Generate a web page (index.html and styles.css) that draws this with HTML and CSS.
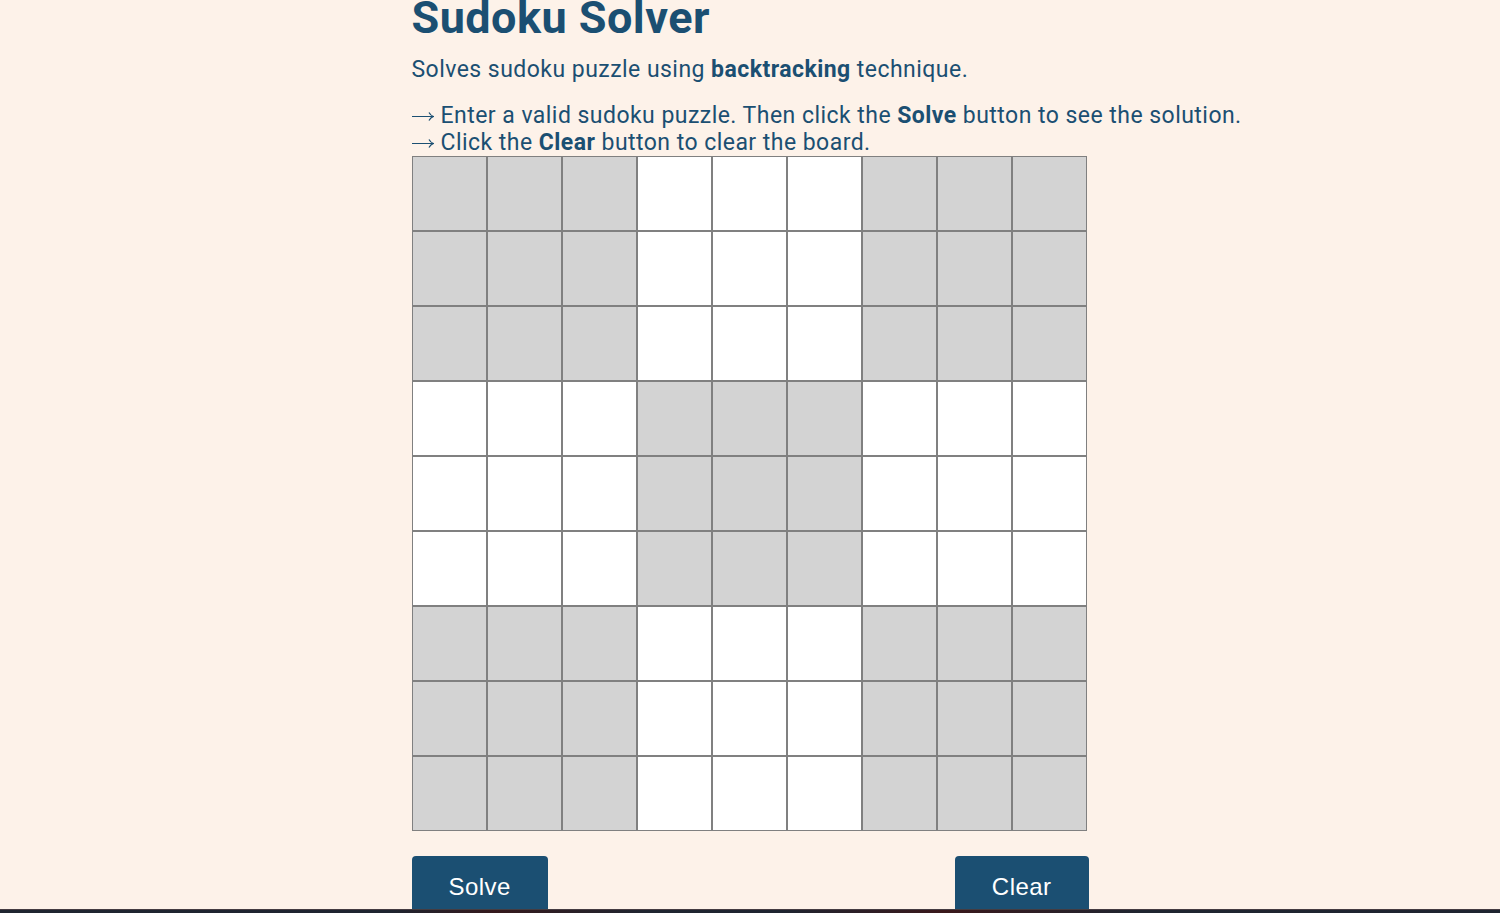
FILE: index.html
```html
<!DOCTYPE html>
<html lang="en">
<head>
<meta charset="utf-8">
<title>Sudoku Solver</title>
<link rel="stylesheet" href="styles.css">
</head>
<body>
<main class="page">
  <div class="solver">
    <h1 class="title">Sudoku Solver</h1>
    <p class="intro">Solves sudoku puzzle using <strong>backtracking</strong> technique.</p>
    <p class="steps"><svg class="arrow" viewBox="0 0 22 12" aria-hidden="true"><path d="M0 5.5H21M17 1.5Q18.5 4.5 21.5 5.5Q18.5 6.5 17 9.5"/></svg>Enter a valid sudoku puzzle. Then click the <strong>Solve</strong> button to see the solution.<br><svg class="arrow" viewBox="0 0 22 12" aria-hidden="true"><path d="M0 5.5H21M17 1.5Q18.5 4.5 21.5 5.5Q18.5 6.5 17 9.5"/></svg>Click the <strong>Clear</strong> button to clear the board.</p>
    <div class="board" id="board"></div>
    <div class="actions">
      <button class="button" type="button" id="solve">Solve</button>
      <button class="button" type="button" id="clear">Clear</button>
    </div>
  </div>
</main>
<footer class="strip"></footer>
<script src="script.js"></script>
</body>
</html>
```
FILE: styles.css
```css
* { box-sizing: border-box; }
body {
  margin: 0;
  height: 100vh;
  display: flex;
  flex-direction: column;
  background: #fdf2e9;
  color: #1b4f72;
  font-family: Roboto, sans-serif;
  font-size: 23px;
  line-height: 27px;
  letter-spacing: 0.02em;
}
.page {
  flex: 1;
  min-height: 0;
  overflow: hidden;
}
.solver {
  width: 677px;
  margin: 0 auto;
}
.title {
  margin: 0 0 20px;
  font-size: 45px;
  line-height: 36px;
}
.intro { margin: 0 0 19px; }
.steps { margin: 0; white-space: nowrap; }
.arrow {
  width: 22px;
  height: 12px;
  margin-right: 7px;
  fill: none;
  stroke: currentColor;
  stroke-width: 1.2;
}
.board {
  display: grid;
  grid-template-columns: repeat(9, 75px);
  grid-auto-rows: 75px;
}
.cell {
  width: 100%;
  height: 100%;
  padding: 0;
  border: 1px solid #808080;
  border-radius: 0;
  background: #fff;
  color: inherit;
  font: inherit;
  text-align: center;
}
.cell-shaded { background: #d3d3d3; }
.actions {
  display: flex;
  justify-content: space-between;
  margin-top: 25px;
}
.button {
  padding: 17px 37px;
  border: 0;
  border-radius: 4px;
  background: #1b4f72;
  color: #fff;
  font: inherit;
  font-family: "Liberation Sans", Arial, sans-serif;
  font-size: 24px;
  letter-spacing: inherit;
}
.strip {
  height: 4px;
  border-top: 1px solid #443c41;
  background: linear-gradient(90deg, #1f2530 0%, #1e2430 26%, #35191c 33%, #1f2530 43%, #1e2430 52%, #3a181b 63%, #1f2530 76%, #1e2430 100%);
}
```
FILE: script.js
```js
const board = document.getElementById("board");
for (let i = 0; i < 81; i++) {
  const row = Math.floor(i / 9);
  const col = i % 9;
  const box = Math.floor(row / 3) + Math.floor(col / 3);
  const cell = document.createElement("input");
  cell.type = "text";
  cell.inputMode = "numeric";
  cell.maxLength = 1;
  cell.className = box % 2 === 0 ? "cell cell-shaded" : "cell";
  cell.setAttribute("aria-label", `Row ${row + 1}, column ${col + 1}`);
  board.append(cell);
}

const cells = [...board.children];

function allowed(grid, index, value) {
  const row = Math.floor(index / 9);
  const col = index % 9;
  return grid.every((other, i) => {
    if (i === index || other !== value) return true;
    const r = Math.floor(i / 9);
    const c = i % 9;
    const sameBox = Math.floor(r / 3) === Math.floor(row / 3) && Math.floor(c / 3) === Math.floor(col / 3);
    return r !== row && c !== col && !sameBox;
  });
}

function solve(grid) {
  const index = grid.indexOf(0);
  if (index < 0) return true;
  for (let value = 1; value <= 9; value++) {
    if (allowed(grid, index, value)) {
      grid[index] = value;
      if (solve(grid)) return true;
      grid[index] = 0;
    }
  }
  return false;
}

document.getElementById("solve").addEventListener("click", () => {
  const grid = cells.map((cell) => Number(cell.value) || 0);
  const valid = grid.every((value, i) => value === 0 || allowed(grid, i, value));
  if (valid && solve(grid)) cells.forEach((cell, i) => { cell.value = grid[i]; });
});
document.getElementById("clear").addEventListener("click", () => {
  cells.forEach((cell) => { cell.value = ""; });
});
```
